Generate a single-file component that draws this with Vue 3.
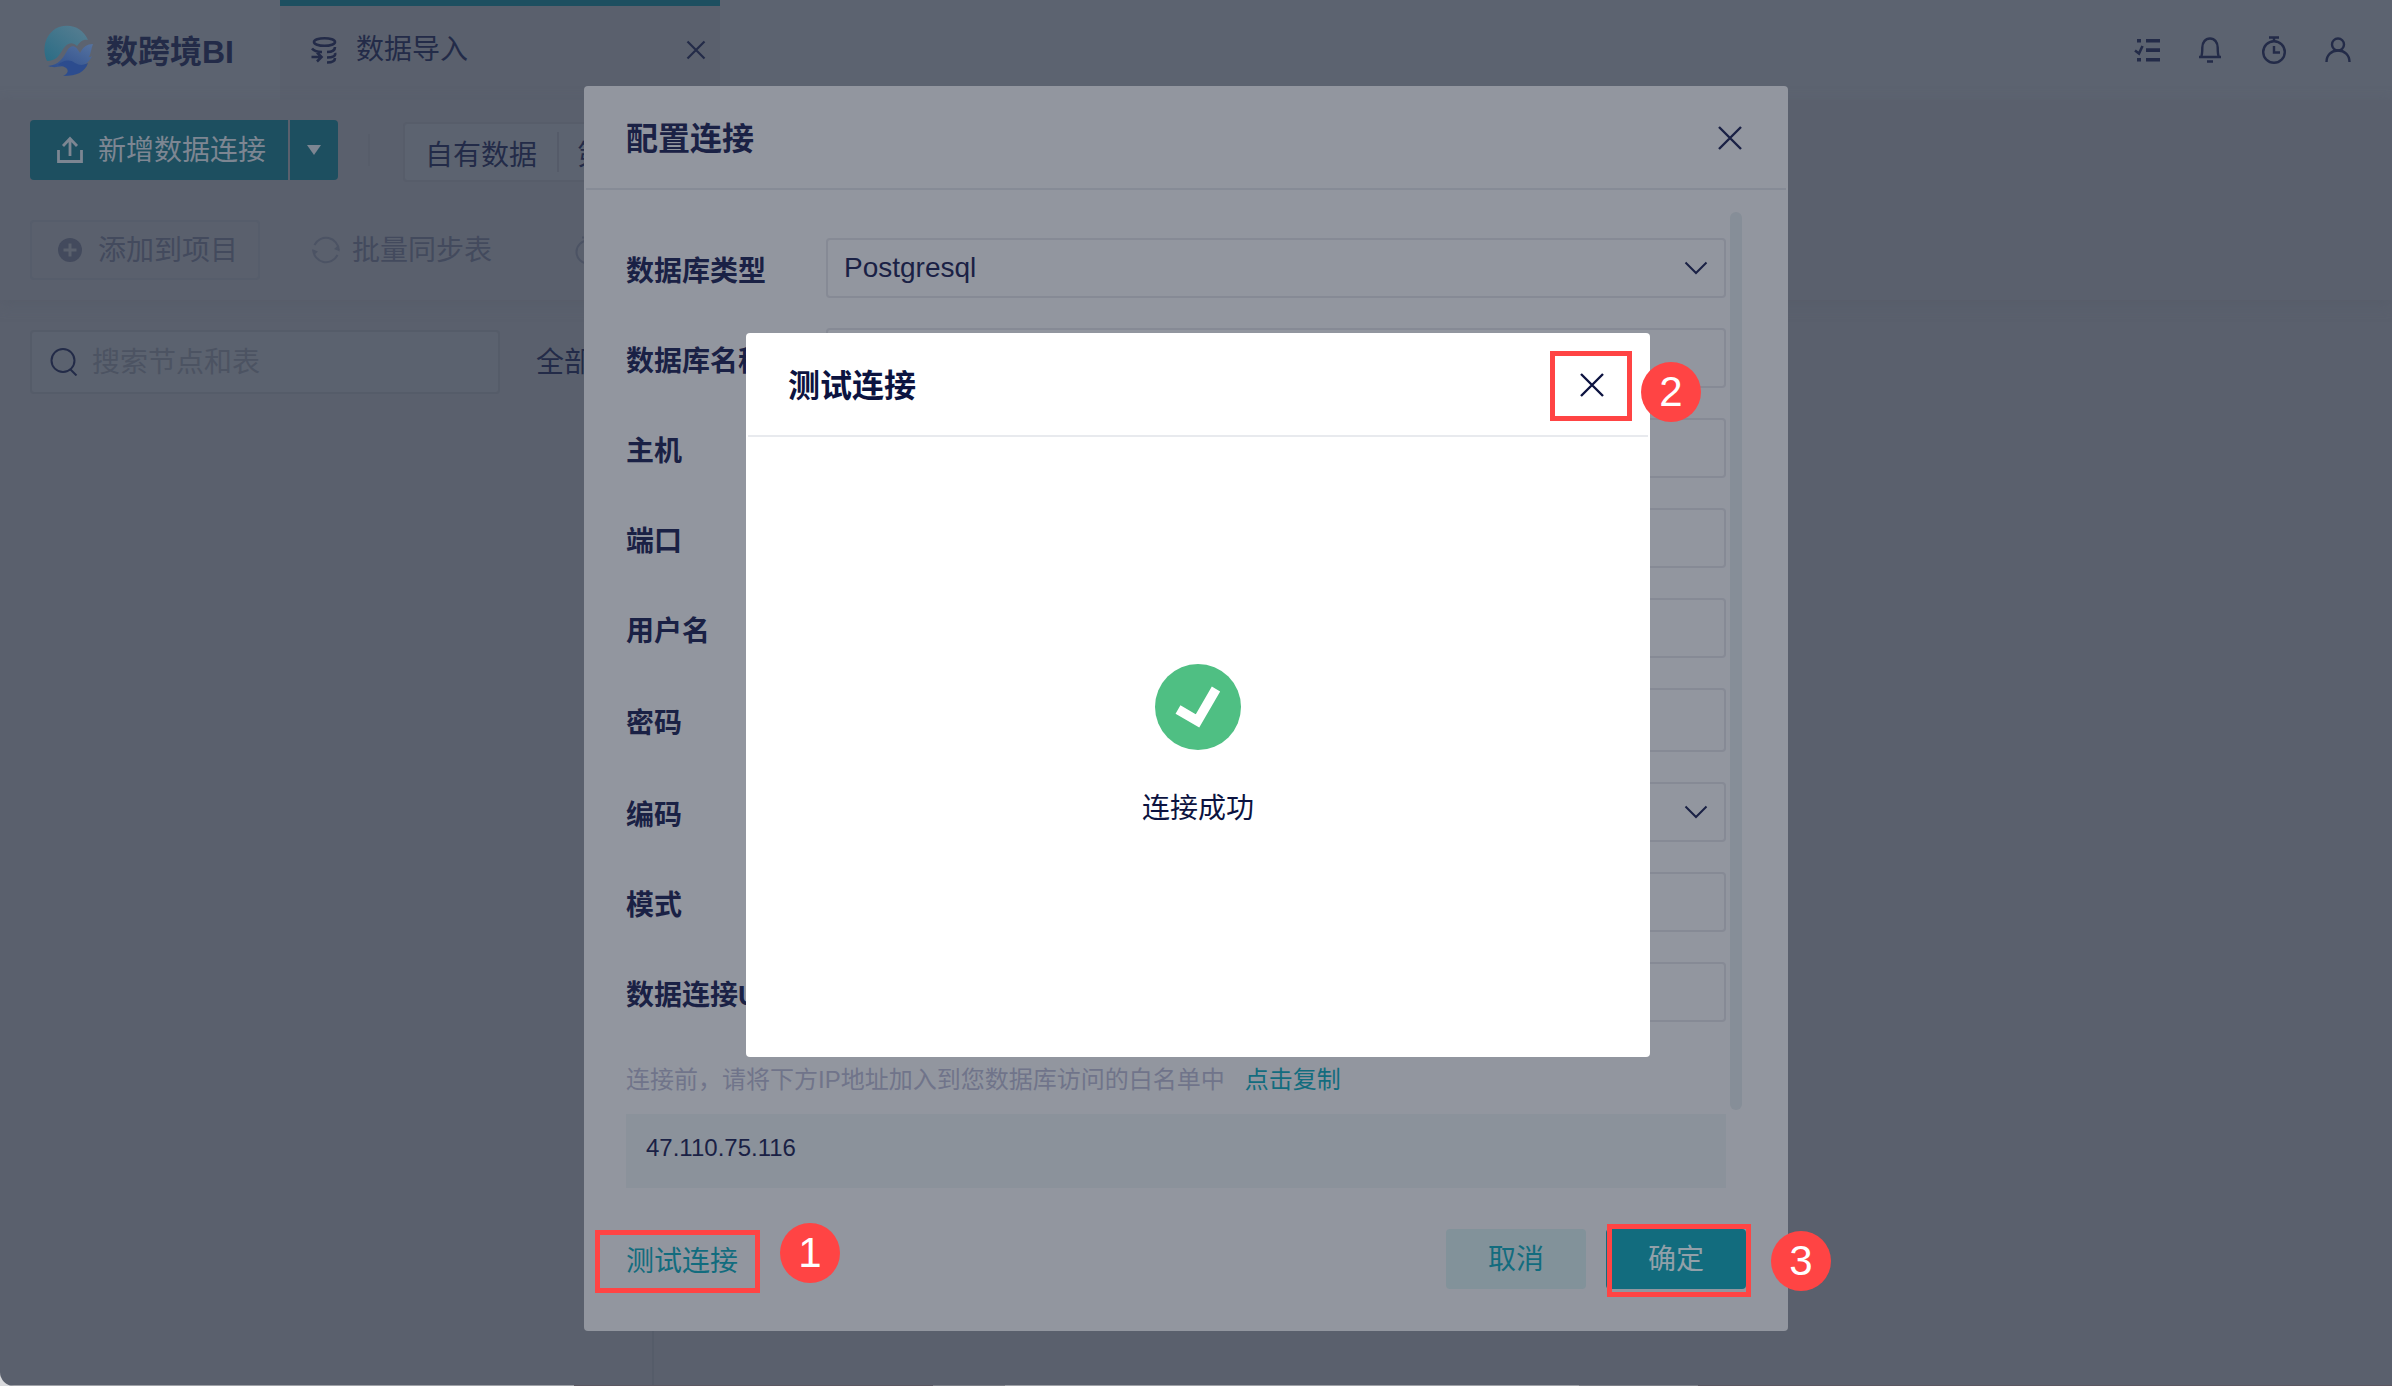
<template>
  <div class="page">
    <header class="topbar">
      <div class="brand">
        <svg class="brand-logo" viewBox="0 0 54 54" aria-hidden="true">
          <defs>
            <linearGradient id="sun" x1="0" y1="1" x2="1" y2="0">
              <stop offset="0" stop-color="#2a6c85" />
              <stop offset="1" stop-color="#5a7f92" />
            </linearGradient>
            <linearGradient id="wave" x1="1" y1="0" x2="0" y2="1">
              <stop offset="0" stop-color="#5673a0" />
              <stop offset="1" stop-color="#2d4d8c" />
            </linearGradient>
          </defs>
          <path d="M5 38C-1 25 4 9 17 4c12-4 24 1 29 13-5-1-8 2-11 6-5-5-10-3-14 3-4 7-7 12-16 12z" fill="url(#sun)" />
          <path d="M6 43c11-1 15-8 19-15 3-6 8-6 11-1l2 3c3-6 7-9 13-9-2 5-2 9-4 13 1 0 2 0 3-1-4 9-12 12-21 10-9-1-15 3-23 0z" fill="url(#wave)" />
          <path d="M16 42c5-5 12-6 17-2 5 3 9 2 13 0-3 9-11 13-25 13 7-3 7-9-5-11z" fill="#2c4c8e" />
        </svg>
        <span class="brand-name">数跨境BI</span>
      </div>
      <div class="tab">
        <svg class="icon-28" viewBox="0 0 28 28" fill="none" stroke="currentColor" stroke-width="2.6" aria-hidden="true">
          <ellipse cx="14.500" cy="6" rx="10.500" ry="3.800" />
          <path d="M25 11c0 3-3 5-8 5M25 17c1 3-2 4.500-8 4.500M25 22c0 3-3 4.500-8 4.500M2 12.500c2 2.500 5 3.500 10 3.500M1.500 21h10M7 16.500l4.500 4.500L7 25.500" />
        </svg>
        <span class="tab-text">数据导入</span>
        <button class="icon-btn" type="button" aria-label="关闭标签">
          <svg class="icon-20" viewBox="0 0 20 20" fill="none" stroke="currentColor" stroke-width="2.2">
            <path d="M1.500 1.500l17 17M18.500 1.500l-17 17" />
          </svg>
        </button>
      </div>
      <nav class="tools">
        <button class="icon-btn" type="button" aria-label="任务">
          <svg class="icon-28" viewBox="0 0 28 28" fill="currentColor">
            <path d="M5 3h4v3.600H5zM14 3h14v3.600H14zM14 12.200h14v3.800H14zM14 22h14v3.600H14zM5 22h4v3.600H5z" />
            <path d="M3 14.500l4 3 3.500-7.500" fill="none" stroke="currentColor" stroke-width="2.600" />
          </svg>
        </button>
        <button class="icon-btn" type="button" aria-label="通知">
          <svg class="icon-28" viewBox="0 0 28 28" fill="none" stroke="currentColor" stroke-width="2.400">
            <path d="M3 21h22M5 21c1.300-2 1.300-4 1.300-9.500 0-5 3-9 7.700-9s7.700 4 7.700 9c0 5.500 0 7.500 1.300 9.500M11 25.500h6" />
          </svg>
        </button>
        <button class="icon-btn" type="button" aria-label="计时">
          <svg class="icon-28" viewBox="0 0 28 28" fill="none" stroke="currentColor" stroke-width="2.400">
            <circle cx="14" cy="16" r="10.800" />
            <path d="M9 1.500h10M14 2v3M14 10v6.500h6" />
          </svg>
        </button>
        <button class="icon-btn" type="button" aria-label="用户">
          <svg class="icon-28" viewBox="0 0 28 28" fill="none" stroke="currentColor" stroke-width="2.400">
            <circle cx="14" cy="8.500" r="6" />
            <path d="M2.500 26c0-7 5-11.500 11.500-11.500S25.500 19 25.500 26" />
          </svg>
        </button>
      </nav>
    </header>

    <section class="toolbar">
      <div class="toolbar-row">
        <div class="split-btn">
          <button class="split-main" type="button">
            <svg class="icon-28" viewBox="0 0 28 28" fill="none" stroke="currentColor" stroke-width="2.800" aria-hidden="true">
              <path d="M2.500 14v11.500h23V14M14 20V3M7 10l7-7.500L21 10" />
            </svg>
            <span class="btn-text">新增数据连接</span>
          </button>
          <button class="split-arrow" type="button" aria-label="更多">
            <svg class="caret" viewBox="0 0 14 10" fill="currentColor"><path d="M0 0h14L7 10z" /></svg>
          </button>
        </div>
        <span class="divider"></span>
        <div class="segment">
          <button class="segment-item" type="button">自有数据</button>
          <button class="segment-item" type="button">第</button>
        </div>
      </div>
      <div class="toolbar-row">
        <button class="ghost-btn bordered" type="button">
          <svg class="icon-24" viewBox="0 0 24 24" aria-hidden="true">
            <circle cx="12" cy="12" r="12" fill="currentColor" />
            <path d="M12 5.500v13M5.500 12h13" stroke="#5a606d" stroke-width="3" />
          </svg>
          <span class="btn-text">添加到项目</span>
        </button>
        <button class="ghost-btn" type="button">
          <svg class="icon-28 faint" viewBox="0 0 28 28" fill="none" stroke="currentColor" stroke-width="2" aria-hidden="true">
            <path d="M2.500 9A12.800 12.800 0 0 1 26.800 14M25.500 19A12.800 12.800 0 0 1 1.200 14" />
            <path d="M0 13l6 2.500-3.500 3zM28 15.500L22 13l3.500-3z" fill="currentColor" stroke="none" />
          </svg>
          <span class="btn-text">批量同步表</span>
        </button>
        <button class="ghost-btn" type="button" aria-label="定时同步">
          <svg class="icon-28 faint" viewBox="0 0 28 28" fill="none" stroke="currentColor" stroke-width="2" aria-hidden="true">
            <circle cx="14" cy="16" r="11.500" />
            <path d="M8 1.500h12" />
          </svg>
        </button>
      </div>
    </section>

    <main class="workspace">
      <aside class="sidebar">
        <div class="search">
          <svg class="icon-28" viewBox="0 0 28 28" fill="none" stroke="currentColor" stroke-width="2" aria-hidden="true">
            <circle cx="13" cy="12.500" r="11.500" />
            <path d="M20.500 21.500l6 6" />
          </svg>
          <input v-model="keyword" type="text" placeholder="搜索节点和表" aria-label="搜索节点和表" />
        </div>
        <span class="filter">全部</span>
      </aside>
    </main>
    <div class="page-edge"></div>

    <div class="layer layer-config">
      <form class="dialog config" @submit.prevent>
        <div class="dialog-head">
          <h2>配置连接</h2>
          <button class="icon-btn" type="button" aria-label="关闭">
            <svg class="icon-24" viewBox="0 0 24 24" fill="none" stroke="currentColor" stroke-width="2.400">
              <path d="M1 1l22 22M23 1L1 23" />
            </svg>
          </button>
        </div>
        <div class="config-body">
          <div class="fields">
            <div v-for="field in fields" :key="field.id" class="field">
              <label :for="field.id">{{ field.label }}</label>
              <div v-if="field.options" class="select-wrap">
                <select :id="field.id" v-model="field.value">
                  <option v-for="option in field.options" :key="option">{{ option }}</option>
                </select>
                <svg class="chevron" viewBox="0 0 24 14" fill="none" stroke="currentColor" stroke-width="2" aria-hidden="true">
                  <path d="M1.500 1.500L12 12 22.500 1.500" />
                </svg>
              </div>
              <input v-else :id="field.id" v-model="field.value" :type="field.type || 'text'" :class="{ tall: field.type === 'password' }" />
            </div>
            <p class="hint">连接前，请将下方IP地址加入到您数据库访问的白名单中<a href="#">点击复制</a></p>
          </div>
          <div class="scrollbar"></div>
        </div>
        <div class="ip-box">47.110.75.116</div>
        <div class="dialog-foot">
          <div class="marked">
            <button class="link-btn" type="button">测试连接</button>
            <span class="mark mark-1"></span>
            <span class="step step-1">1</span>
          </div>
          <div class="foot-actions">
            <button class="btn cancel" type="button">取消</button>
            <div class="marked">
              <button class="btn confirm" type="submit">确定</button>
              <span class="mark mark-3"></span>
              <span class="step step-3">3</span>
            </div>
          </div>
        </div>
      </form>
    </div>

    <div class="layer layer-test">
      <div class="dialog test">
        <div class="dialog-head">
          <h2>测试连接</h2>
          <div class="marked">
            <button class="icon-btn" type="button" aria-label="关闭">
              <svg class="icon-24" viewBox="0 0 24 24" fill="none" stroke="currentColor" stroke-width="2.400">
                <path d="M1 1l22 22M23 1L1 23" />
              </svg>
            </button>
            <span class="mark mark-2"></span>
            <span class="step step-2">2</span>
          </div>
        </div>
        <div class="result">
          <svg class="result-icon" viewBox="0 0 86 86" aria-hidden="true">
            <circle cx="43" cy="43" r="43" fill="#4fbf83" />
            <path d="M23 45.500L42.500 57 61 25" fill="none" stroke="#fff" stroke-width="9.600" />
          </svg>
          <p>连接成功</p>
        </div>
      </div>
    </div>
  </div>
</template>

<script setup>
import { ref } from 'vue';

const keyword = ref('');

const fields = ref([
  { id: 'db-type', label: '数据库类型', value: 'Postgresql', options: ['Postgresql'] },
  { id: 'db-name', label: '数据库名称', value: '' },
  { id: 'db-host', label: '主机', value: '' },
  { id: 'db-port', label: '端口', value: '' },
  { id: 'db-user', label: '用户名', value: '' },
  { id: 'db-password', label: '密码', value: '', type: 'password' },
  { id: 'db-charset', label: '编码', value: '', options: [''] },
  { id: 'db-schema', label: '模式', value: '' },
  { id: 'db-url', label: '数据连接URL', value: '' },
]);
</script>

<style>
body {
  margin: 0;
  background: #d9dadd;
}
</style>

<style scoped>
.page {
  position: relative;
  display: flex;
  flex-direction: column;
  min-height: 100vh;
  overflow: hidden;
  border-bottom-left-radius: 14px;
  background: #5a606d;
  color: #232b48;
  font-family: "Liberation Sans", "Noto Sans CJK SC", sans-serif;
  font-size: 28px;
  line-height: 40px;
}
.page * {
  box-sizing: border-box;
}
button,
input,
select {
  margin: 0;
  padding: 0;
  border: 0;
  background: none;
  color: inherit;
  font: inherit;
}
svg {
  display: block;
  flex: none;
}
h2,
p {
  margin: 0;
}
.icon-20 {
  width: 20px;
  height: 20px;
}
.icon-24 {
  width: 24px;
  height: 24px;
}
.icon-28 {
  width: 28px;
  height: 28px;
}
.icon-btn {
  display: block;
}
.btn-text {
  padding-top: 2px;
}

/* top bar */
.topbar {
  display: flex;
  height: 100px;
  background: #5c6370;
}
.brand {
  display: flex;
  align-items: center;
  gap: 10px;
  width: 280px;
  padding-left: 42px;
}
.brand-logo {
  width: 54px;
  height: 54px;
}
.brand-name {
  padding-top: 4px;
  font-size: 32px;
  font-weight: 700;
}
.tab {
  display: flex;
  align-items: center;
  width: 440px;
  padding: 0 14px 6px 30px;
  border-top: 6px solid #1d4f60;
  background: #5a606d;
}
.tab-text {
  flex: 1;
  padding-left: 18px;
}
.tools {
  display: flex;
  flex: 1;
  align-items: center;
  justify-content: flex-end;
  gap: 36px;
  padding-right: 40px;
}

/* toolbar */
.toolbar {
  display: flex;
  flex-direction: column;
  gap: 40px;
  padding: 20px 30px;
  box-shadow: 0 4px 12px #575d6a;
}
.toolbar-row {
  display: flex;
  height: 60px;
}
.split-btn {
  display: flex;
  gap: 2px;
}
.split-main,
.split-arrow {
  display: flex;
  align-items: center;
  background: #1d4f60;
  color: #7d8692;
}
.split-main {
  gap: 14px;
  width: 258px;
  padding-left: 26px;
  border-radius: 4px 0 0 4px;
}
.split-arrow {
  justify-content: center;
  width: 48px;
  border-radius: 0 4px 4px 0;
}
.caret {
  width: 14px;
  height: 10px;
}
.divider {
  align-self: center;
  width: 2px;
  height: 32px;
  margin: 0 33px 0 30px;
  background: #575d6a;
}
.segment {
  display: flex;
  align-items: center;
  height: 60px;
  margin-top: 2px;
  border: 2px solid #575d6a;
  border-radius: 4px;
  background: #5c6370;
}
.segment-item {
  height: 40px;
  padding: 4px 20px 0;
  line-height: 40px;
}
.segment-item + .segment-item {
  padding-left: 18px;
  border-left: 2px solid #555b69;
}
.ghost-btn {
  display: flex;
  align-items: center;
  gap: 12px;
  margin-right: 52px;
  color: #434a5d;
}
.ghost-btn + .ghost-btn {
  margin-right: 82px;
}
.bordered {
  gap: 16px;
  padding: 0 20px 0 26px;
  border: 2px solid #565d6b;
  border-radius: 4px;
}
.faint {
  color: #4c5364;
}

/* workspace */
.workspace {
  display: flex;
  flex: 1;
}
.sidebar {
  display: flex;
  align-items: flex-start;
  gap: 36px;
  width: 654px;
  padding: 30px 0 0 30px;
  border-right: 2px solid #555c69;
}
.search {
  display: flex;
  align-items: center;
  gap: 14px;
  width: 470px;
  height: 64px;
  padding-left: 18px;
  border: 2px solid #555c69;
  border-radius: 4px;
  background: #5b626f;
}
.search input {
  flex: 1;
  min-width: 0;
  padding-top: 2px;
  outline: none;
}
.search input::placeholder {
  color: #4c5362;
  opacity: 1;
}
.filter {
  padding-top: 13px;
}
.page-edge {
  height: 1px;
  background: linear-gradient(
    90deg,
    #a0a2a8 0 24%,
    #5c5862 24% 39%,
    #7d7f87 39% 42%,
    #a0a2a8 42% 66%,
    #7d7f87 66% 71%,
    #5c5862 71%
  );
}

/* dialogs */
.layer {
  position: absolute;
  inset: 0;
  display: flex;
  align-items: flex-start;
  justify-content: center;
}
.layer-config {
  padding: 86px 20px 0 0;
}
.layer-test {
  padding: 333px 0 0 4px;
}
.dialog {
  border-radius: 4px;
  color: #1a2145;
}
.dialog-head {
  display: flex;
  align-items: center;
  justify-content: space-between;
  height: 104px;
  margin: 0 2px;
  padding: 2px 44px 0 40px;
  border-bottom: 2px solid #868b96;
}
.dialog-head h2 {
  padding-top: 2px;
  font-size: 32px;
  line-height: 40px;
}
.config {
  width: 1204px;
  padding-bottom: 42px;
  background: #92969f;
}
.config-body {
  display: flex;
  gap: 4px;
  padding: 22px 46px 0 42px;
}
.fields {
  display: flex;
  flex: 1;
  flex-direction: column;
  gap: 30px;
  padding: 26px 0 12px;
}
.scrollbar {
  width: 12px;
  border-radius: 6px;
  background: #868e98;
}
.field {
  display: flex;
  align-items: center;
}
.field label {
  width: 200px;
  padding-top: 8px;
  font-weight: 700;
}
.field input,
.field select {
  flex: 1;
  width: 100%;
  height: 60px;
  padding: 0 16px;
  border: 2px solid #868a95;
  border-radius: 4px;
  outline: none;
  appearance: none;
}
.field input.tall {
  height: 64px;
}
.select-wrap {
  position: relative;
  display: flex;
  flex: 1;
}
.chevron {
  position: absolute;
  top: 23px;
  right: 18px;
  width: 24px;
  height: 14px;
  pointer-events: none;
}
.hint {
  padding-top: 10px;
  color: #70748a;
  font-size: 24px;
  line-height: 36px;
}
.hint a {
  margin-left: 20px;
  color: #126c7e;
  text-decoration: none;
}
.ip-box {
  height: 74px;
  margin: 4px 62px 0 42px;
  padding: 16px 20px;
  background: #8b929b;
  font-size: 24px;
  line-height: 36px;
}
.dialog-foot {
  display: flex;
  align-items: center;
  justify-content: space-between;
  margin-top: 41px;
  padding: 0 42px;
}
.foot-actions {
  display: flex;
  gap: 20px;
}
.link-btn {
  display: block;
  height: 60px;
  padding-top: 6px;
  color: #126c7e;
}
.btn {
  display: block;
  width: 140px;
  height: 60px;
  padding-top: 2px;
  border-radius: 4px;
}
.cancel {
  background: #82929a;
  color: #126c7e;
}
.confirm {
  background: #126c7e;
  color: #92a0a9;
}

/* test result */
.test {
  width: 904px;
  height: 724px;
  background: #fff;
  color: #0c1340;
}
.test .dialog-head {
  border-color: #e8eaee;
}
.result {
  display: flex;
  flex-direction: column;
  align-items: center;
  gap: 39px;
  padding-top: 227px;
}
.result-icon {
  width: 86px;
  height: 86px;
}

/* step marks over the controls */
.marked {
  position: relative;
}
.mark {
  position: absolute;
  border: 5px solid #ff4444;
  pointer-events: none;
}
.mark-1 {
  inset: 1px -22px -4px -31px;
}
.mark-2 {
  inset: -22px -28px -24px -30px;
}
.mark-3 {
  inset: -5px -5px -8px 1px;
}
.step {
  position: absolute;
  width: 60px;
  height: 60px;
  border-radius: 50%;
  background: #ff4444;
  color: #fff;
  font-size: 42px;
  line-height: 60px;
  text-align: center;
}
.step-1 {
  top: -6px;
  left: 154px;
}
.step-2 {
  top: -11px;
  left: 61px;
}
.step-3 {
  top: 2px;
  left: 165px;
}
</style>
